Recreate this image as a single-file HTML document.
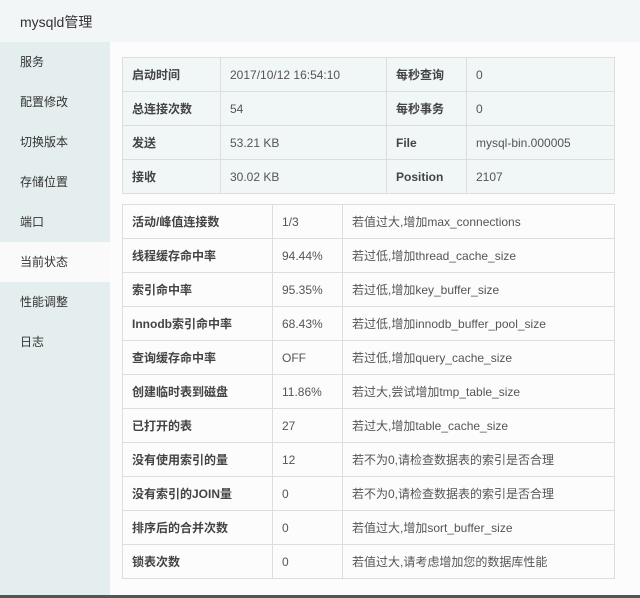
<!DOCTYPE html>
<html><head><meta charset="utf-8"><style>
*{margin:0;padding:0;box-sizing:border-box}
body{width:640px;height:598px;overflow:hidden;background:#f4f7f7;font-family:"Liberation Sans","Noto Sans CJK SC",sans-serif;font-size:12px;color:#555;position:relative}
.hd{position:absolute;left:0;top:0;width:640px;height:42px;background:#f3f6f6;padding:12px 0 0 20px;font-size:14px;color:#333}
.sb{position:absolute;left:0;top:42px;width:110px;height:556px;background:#e4eeee}
.sb div{height:40px;line-height:40px;padding-left:20px;color:#333;font-size:12px}
.sb .a{background:#fafafa}
.ct{position:absolute;left:110px;top:42px;width:530px;height:553px;background:#fcfcfc}
table{position:absolute;border-collapse:collapse;left:122px;width:493px}
td{border:1px solid #ddd;height:34px;padding:0 0 0 9px;color:#555}
td.b{font-weight:bold;color:#444}
.t1{top:57px;background:#f1f6f6}
.t2{top:204px;background:#fcfcfc}
.bot{position:absolute;left:0;top:595px;width:640px;height:3px;background:#555}
</style></head><body>
<div class="hd">mysqld管理</div>
<div class="sb"><div>服务</div><div>配置修改</div><div>切换版本</div><div>存储位置</div><div>端口</div><div class="a">当前状态</div><div>性能调整</div><div>日志</div></div>
<div class="ct"></div>
<table class="t1">
<tr><td class="b" style="width:98px">启动时间</td><td style="width:166px">2017/10/12 16:54:10</td><td class="b" style="width:80px">每秒查询</td><td>0</td></tr>
<tr><td class="b">总连接次数</td><td>54</td><td class="b">每秒事务</td><td>0</td></tr>
<tr><td class="b">发送</td><td>53.21 KB</td><td class="b">File</td><td>mysql-bin.000005</td></tr>
<tr><td class="b">接收</td><td>30.02 KB</td><td class="b">Position</td><td>2107</td></tr>
</table>
<table class="t2">
<tr><td class="b" style="width:150px">活动/峰值连接数</td><td style="width:70px">1/3</td><td>若值过大,增加max_connections</td></tr>
<tr><td class="b">线程缓存命中率</td><td>94.44%</td><td>若过低,增加thread_cache_size</td></tr>
<tr><td class="b">索引命中率</td><td>95.35%</td><td>若过低,增加key_buffer_size</td></tr>
<tr><td class="b">Innodb索引命中率</td><td>68.43%</td><td>若过低,增加innodb_buffer_pool_size</td></tr>
<tr><td class="b">查询缓存命中率</td><td>OFF</td><td>若过低,增加query_cache_size</td></tr>
<tr><td class="b">创建临时表到磁盘</td><td>11.86%</td><td>若过大,尝试增加tmp_table_size</td></tr>
<tr><td class="b">已打开的表</td><td>27</td><td>若过大,增加table_cache_size</td></tr>
<tr><td class="b">没有使用索引的量</td><td>12</td><td>若不为0,请检查数据表的索引是否合理</td></tr>
<tr><td class="b">没有索引的JOIN量</td><td>0</td><td>若不为0,请检查数据表的索引是否合理</td></tr>
<tr><td class="b">排序后的合并次数</td><td>0</td><td>若值过大,增加sort_buffer_size</td></tr>
<tr><td class="b">锁表次数</td><td>0</td><td>若值过大,请考虑增加您的数据库性能</td></tr>
</table>
<div class="bot"></div>
</body></html>
